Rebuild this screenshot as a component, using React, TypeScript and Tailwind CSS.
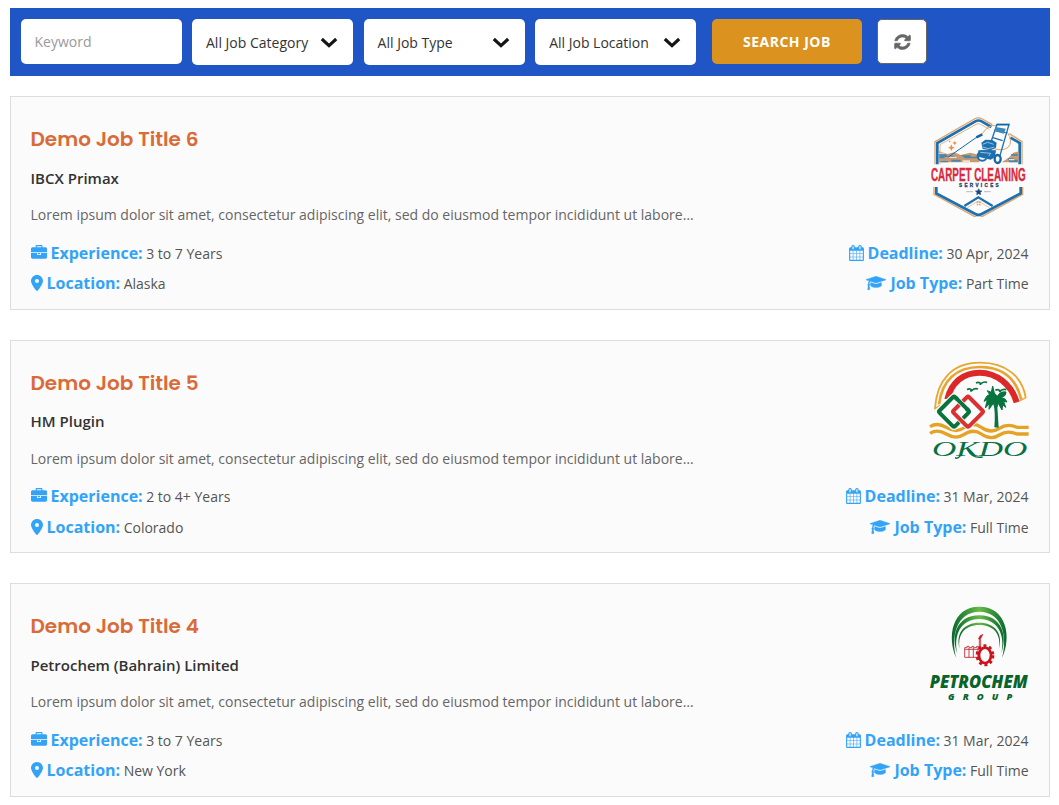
import type { ReactNode } from "react";
import { FaLocationDot } from "react-icons/fa6";

const BRIEFCASE =
  "M640 256h512v-128h-512v128zm1152 640v480q0 66-47 113t-113 47h-1472q-66 0-113-47t-47-113v-480h672v160q0 26 19 45t45 19h320q26 0 45-19t19-45v-160h672zm-768 0v128h-256v-128h256zm768-480v384h-1792v-384q0-66 47-113t113-47h352v-160q0-40 28-68t68-28h576q40 0 68 28t28 68v160h352q66 0 113 47t47 113z";
const CALENDAR =
  "M192 1664h288v-288h-288v288zm352 0h320v-288h-320v288zm-352-352h288v-320h-288v320zm352 0h320v-320h-320v320zm-352-384h288v-288h-288v288zm736 736h320v-288h-320v288zm-384-736h320v-288h-320v288zm768 736h288v-288h-288v288zm-384-352h320v-320h-320v320zm-352-864v-288q0-13-9.5-22.5t-22.5-9.5h-64q-13 0-22.5 9.5t-9.5 22.5v288q0 13 9.5 22.5t22.5 9.5h64q13 0 22.5-9.5t9.5-22.5zm736 864h288v-320h-288v320zm-384-384h320v-288h-320v288zm384 0h288v-288h-288v288zm32-480v-288q0-13-9.5-22.5t-22.5-9.5h-64q-13 0-22.5 9.5t-9.5 22.5v288q0 13 9.5 22.5t22.5 9.5h64q13 0 22.5-9.5t9.5-22.5zm384-64v1280q0 52-38 90t-90 38h-1408q-52 0-90-38t-38-90v-1280q0-52 38-90t90-38h128v-96q0-66 47-113t113-47h64q66 0 113 47t47 113v96h384v-96q0-66 47-113t113-47h64q66 0 113 47t47 113v96h128q52 0 90 38t38 90z";
const GRADUATION =
  "M1774 836l18 316q4 69-82 128t-235 93.5-323 34.5-323-34.5-235-93.5-82-128l18-316 574 181q22 7 48 7t48-7zm530-324q0 23-22 31l-1120 352q-4 1-10 1t-10-1l-652-206q-43 34-71 111.5t-34 178.5q63 36 63 109 0 69-58 107l58 433q2 14-8 25-9 11-24 11h-192q-15 0-24-11-10-11-8-25l58-433q-58-38-58-107 0-73 65-111 11-207 98-330l-333-104q-22-8-22-31t22-31l1120-352q4-1 10-1t10 1l1120 352q22 8 22 31z";
const REFRESH =
  "M1511 1056q0 5-1 7-64 268-268 434.5t-478 166.5q-146 0-282.5-55t-243.5-157l-129 129q-19 19-45 19t-45-19-19-45v-448q0-26 19-45t45-19h448q26 0 45 19t19 45-19 45l-137 137q71 66 161 102t187 36q134 0 250-65t186-179q11-17 53-117 8-23 30-23h192q13 0 22.5 9.5t9.5 22.5zm25-800v448q0 26-19 45t-45 19h-448q-26 0-45-19t-19-45 19-45l138-138q-148-137-349-137-134 0-250 65t-186 179q-11 17-53 117-8 23-30 23h-199q-13 0-22.5-9.5t-9.5-22.5v-7q65-268 270-434.5t480-166.5q146 0 284 55.5t245 156.5l130-129q19-19 45-19t45 19 19 45z";

function Glyph({ d, box, className }: { d: string; box: string; className: string }) {
  return (
    <svg viewBox={box} className={className} fill="currentColor">
      <path d={d} />
    </svg>
  );
}

function Select({ label }: { label: string }) {
  return (
    <button className="mr-[10.4px] flex h-[46px] w-[161.2px] items-center justify-between rounded-[5px] bg-white pr-[15px] pl-[14px] text-sm text-[#333]">
      <span className="pt-[2px]">{label}</span>
      <svg viewBox="0 0 18 11" className="h-[11px] w-[18px]" fill="none">
        <path d="M1.8 2 9 8.6 16.2 2" stroke="#151515" strokeWidth="3.1" />
      </svg>
    </button>
  );
}

function CarpetLogo() {
  return (
    <svg viewBox="27 36 300 300" className="size-[100px]" fontFamily="'Liberation Sans Narrow','Liberation Sans',sans-serif">
      <g fill="none">
        <path d="M45 178V110L163 42Q175 35 187 42L217 59M268 86 306 110V178" stroke="#dda46c" strokeWidth="4" />
        <path d="M52 178V114L166 49Q175 44 185 49L214 66M271 98 299 114V178" stroke="#1d70b0" strokeWidth="8" />
        <path d="M60 178V119L168 58Q175 54 182 58L208 73" stroke="#dda46c" strokeWidth="2.5" />
        <path d="M42 246V268L163 334Q175 341 187 334L308 268V246" stroke="#dda46c" strokeWidth="4" />
        <path d="M49 246V265L166 327Q175 332 185 327L302 265V246" stroke="#1d70b0" strokeWidth="8" />
        <path d="M133 303 175 277 218 303" stroke="#1d70b0" strokeWidth="7" />
        <path d="M142 308 175 288 208 308" stroke="#dda46c" strokeWidth="2" />
      </g>
      <path d="M57 139 82 147 103 142 122 150 150 143 178 149V172H57z" fill="#c79a73" />
      <path d="M245 172 266 158 280 143 296 139V172z" fill="#c79a73" />
      <path d="M58 148h22v4h24v4h-30v4H58zm36 16h28v6H94zm28-13h30v4h22v5h-38zm-60 17h22v4H62zm201-8h18v4h12v8h-25zm11-13h19v5h-19z" fill="#4b86ae" />
      <path d="M57 143h17v3H57zm31 12h22v4H88zm40 11h22v5h-22zm139-4h16v4h-16z" fill="#f4dfc7" />
      <path d="m94 118 3 7 7 3-7 3-3 7-3-7-7-3 7-3zm10-11 2 5 5 2-5 2-2 5-2-5-5-2 5-2zm-15-2 1 3 3 1-3 1-1 3-1-3-3-1 3-1z" fill="#ed8d43" />
      <g fill="none">
        <path d="M187 86Q205 57 230 62M261 80Q281 111 264 127 249 139 220 131" stroke="#dda46c" strokeWidth="3" />
        <path d="M88 154 171 96" stroke="#1765a2" strokeWidth="3" />
        <path d="M169 97 187 88" stroke="#1765a2" strokeWidth="8" />
        <path d="M211 116 231 58H267L239 155M223 75 257 83M216 97 248 107" stroke="#1d70b0" strokeWidth="4" />
        <path d="M230 59H268" stroke="#1765a2" strokeWidth="5" />
        <circle cx="187" cy="153" r="14" stroke="#1d70b0" strokeWidth="6" />
        <ellipse cx="233" cy="162" rx="9" ry="12" stroke="#1765a2" strokeWidth="7" />
      </g>
      <path d="m184 113 12-9 21 1 13 8-2 15-16 8-24-4zm-9 23 31-1 22 1-3 21-13 7-38-9z" fill="#1d70b0" />
      <path d="m227 66 30 5-5 15-28-7z" fill="#3d89bc" />
      <path d="m188 118 15-6 18 6m-33 8 17 5 18-5M181 142l31 3-6 8" fill="none" stroke="#d7eaf5" strokeWidth="2" />
      <text x="33" y="228" fontSize="56" fontWeight="700" fill="#d62b3d" stroke="#d62b3d" strokeWidth="1" textLength="284" lengthAdjust="spacingAndGlyphs">CARPET CLEANING</text>
      <text x="117" y="246" fontSize="14" fontWeight="700" fill="#263f66" stroke="#263f66" strokeWidth="0.8" textLength="119">SERVICES</text>
      <path d="m176 251 3 6 7 1-5 4 1 7-6-3-6 3 1-7-5-4 7-1z" fill="#164b7f" stroke="#164b7f" strokeWidth="1.5" />
      <path d="M139 260h20m33 0h20" stroke="#b9bbc0" strokeWidth="3" />
      <path d="M170 289h5v5h-5zm7 0h5v5h-5zm-7 7h5v5h-5zm7 0h5v5h-5z" fill="#dda46c" />
    </svg>
  );
}

function OkdoLogo() {
  return (
    <svg viewBox="27 33 300 300" className="size-[100px]">
      <g fill="none">
        <path d="M45 176C50 89 98 38 180 38S307 83 317 142" stroke="#e6a630" strokeWidth="5.5" />
        <path d="M57 163C66 92 108 51 180 51S290 91 304 149" stroke="#e6a630" strokeWidth="8" />
        <path d="M43 178 61 165M299 153 319 142" stroke="#e6a630" strokeWidth="4" />
        <path d="M82 148C94 97 130 68 179 68S274 102 290 157" stroke="#dc2828" strokeWidth="18" />
        <path d="M30 230C47 219 62 222 79 232S114 246 131 234 167 220 184 232 220 247 238 235 275 225 291 232L326 232M30 250C47 239 62 242 79 252S114 266 131 254 167 240 184 252 220 267 238 255 275 245 291 252L326 252" stroke="#e5a326" strokeWidth="10" />
        <rect x="68" y="151" width="68" height="68" rx="5" transform="rotate(45 102 185)" stroke="#fcfcfc" strokeWidth="18" />
        <rect x="69" y="152" width="66" height="66" rx="5" transform="rotate(45 102 185)" stroke="#08733d" strokeWidth="12" />
        <rect x="111" y="152" width="66" height="66" rx="5" transform="rotate(45 144 185)" stroke="#fcfcfc" strokeWidth="17" />
        <rect x="111" y="152" width="66" height="66" rx="5" transform="rotate(45 144 185)" stroke="#d83233" strokeWidth="12" />
        <path d="m112 148 27 27" stroke="#fcfcfc" strokeWidth="16" />
        <path d="m106 142 40 40" stroke="#08733d" strokeWidth="12" />
        <path d="M141 119q8-5 15 2 8-7 18-4M168 99q8-5 15 2 8-7 18-4M226 121q8-5 15 2 8-7 18-4" stroke="#08733d" strokeWidth="5" />
        <path d="M153 120v5M181 100v5M239 122v5" stroke="#08733d" strokeWidth="5" />
      </g>
      <path d="M223 232q4-43-3-75l11-2 5 78z" fill="#08733d" />
      <path d="M220 143Q207 125 197 144L192 154 202 149 196 174 208 161 207 178 220 160 228 177 235 160 246 180 248 164 257 172 251 154 261 156Q257 144 244 143 260 137 258 126 241 123 232 139L223 129 218 108 214 127 202 122 210 136Z" fill="#08733d" stroke="#08733d" strokeWidth="3" />
      <text x="36" y="318" fontSize="60" fontFamily="'Liberation Serif',serif" fontStyle="italic" fill="#087144" textLength="286" lengthAdjust="spacingAndGlyphs">OKDO</text>
      <path d="m143 300q14 26 45 21M105 323q7 5 16-5" fill="none" stroke="#087144" strokeWidth="4" />
    </svg>
  );
}

function PetrochemLogo() {
  return (
    <svg viewBox="27 28 300 300" className="size-[100px]" fontFamily="'Open Sans','Liberation Sans',sans-serif">
      <defs>
        <linearGradient id="arch" x1="0" x2="1" y1="0" y2="0">
          <stop offset="0" stopColor="#08682e" />
          <stop offset="0.5" stopColor="#67ba45" />
          <stop offset="1" stopColor="#08682e" />
        </linearGradient>
      </defs>
      <g fill="url(#arch)">
        <path d="M109 190C80 128 96 36 178 36S276 128 246 190C264 127 246 51 178 51S91 127 109 190" />
        <path d="M112 176C92 126 109 62 178 62S263 126 244 176C256 123 235 73 178 73S100 123 112 176" />
        <path d="M119 162C106 116 132 84 178 84S250 116 237 162C244 120 222 91 178 91S112 120 119 162" />
      </g>
      <g fill="none" stroke="#bf242b">
        <path d="M134 188V159h7v-4h6v4h9v-4h5v4h9v-4h5v4h8M134 188h40M147 160v28M160 160v28M174 160v28M135 164h42" strokeWidth="2.5" />
        <path d="M178 157V135h4v22" strokeWidth="2.5" />
      </g>
      <path d="m175 133 5-10 9-4-4 8-4 7z" fill="#bf242b" stroke="#bf242b" strokeWidth="1.5" />
      <ellipse cx="195" cy="182" rx="24" ry="29" fill="none" stroke="#c9131d" strokeWidth="8" strokeDasharray="9 8.1" />
      <ellipse cx="195" cy="182" rx="18" ry="23" fill="#fcfcfc" stroke="#c9131d" strokeWidth="8" />
      <text x="29" y="279" fontSize="52" fontWeight="800" fontStyle="italic" fill="#08642b" textLength="294" lengthAdjust="spacingAndGlyphs">PETROCHEM</text>
      <text x="84" y="315" fontSize="28" fontWeight="800" fontStyle="italic" fill="#08642b" textLength="193">GROUP</text>
    </svg>
  );
}

interface Job {
  title: string;
  company: string;
  experience: string;
  location: string;
  deadline: string;
  type: string;
  logo: ReactNode;
}

const jobs: Job[] = [
  { title: "Demo Job Title 6", company: "IBCX Primax", experience: "3 to 7 Years", location: "Alaska", deadline: "30 Apr, 2024", type: "Part Time", logo: <CarpetLogo /> },
  { title: "Demo Job Title 5", company: "HM Plugin", experience: "2 to 4+ Years", location: "Colorado", deadline: "31 Mar, 2024", type: "Full Time", logo: <OkdoLogo /> },
  { title: "Demo Job Title 4", company: "Petrochem (Bahrain) Limited", experience: "3 to 7 Years", location: "New York", deadline: "31 Mar, 2024", type: "Full Time", logo: <PetrochemLogo /> },
];

function Meta({ icon, label, value }: { icon: ReactNode; label: string; value: string }) {
  return (
    <div className="flex h-[30.4px] items-center">
      <span className="mr-1 text-[#33a3f8]">{icon}</span>
      <span className="text-base font-bold text-[#33a3f8]">{label}</span>
      <span className="ml-[3.5px] pt-[1.5px] text-sm text-[#555]">{value}</span>
    </div>
  );
}

function JobCard({ job }: { job: Job }) {
  return (
    <article className="h-[213.5px] border border-[#ddd] bg-[#fbfbfb] pt-5 pr-[20.5px] pl-[19.5px]">
      <div className="flex h-[120.8px] justify-between">
        <div>
          <h2 className="pt-[7px] font-[Poppins,Inter,sans-serif] text-[20px] leading-[30px] font-semibold text-[#d96b39]">{job.title}</h2>
          <h3 className="mt-[12.5px] text-[15px] leading-[22px] font-semibold text-[#333]">{job.company}</h3>
          <p className="mt-[15.5px] text-sm leading-[22px] text-[#666]">Lorem ipsum dolor sit amet, consectetur adipiscing elit, sed do eiusmod tempor incididunt ut labore…</p>
        </div>
        <div>{job.logo}</div>
      </div>
      <div className="flex justify-between">
        <div>
          <Meta icon={<Glyph d={BRIEFCASE} box="0 0 1792 1792" className="h-4 w-4" />} label="Experience:" value={job.experience} />
          <Meta icon={<FaLocationDot className="h-4 w-3" />} label="Location:" value={job.location} />
        </div>
        <div className="flex flex-col items-end">
          <Meta icon={<Glyph d={CALENDAR} box="64 0 1664 1792" className="h-4 w-[15px]" />} label="Deadline:" value={job.deadline} />
          <Meta
            icon={
              <svg viewBox="0 0 2304 1792" className="h-4 w-5" fill="currentColor">
                <path d={GRADUATION} stroke="currentColor" strokeWidth="40" />
              </svg>
            }
            label="Job Type:"
            value={job.type}
          />
        </div>
      </div>
    </article>
  );
}

export default function App() {
  return (
    <main className="h-[805px] overflow-hidden bg-white pt-2 pr-[9px] pl-[10px] font-['Open_Sans',sans-serif]">
      <form className="flex h-[68px] items-start bg-[#1f55c5] pt-[11px] pl-[11px]">
        <input aria-label="Keyword" placeholder="Keyword" className="mr-[10px] h-[45px] w-[161px] rounded-[5px] bg-white px-[13.5px] text-sm placeholder:text-[#999]" />
        <Select label="All Job Category" />
        <Select label="All Job Type" />
        <Select label="All Job Location" />
        <button className="ml-[5.2px] h-[45px] w-[150px] rounded-[5px] bg-[#dc921f] text-sm font-bold tracking-[0.5px] text-white">SEARCH JOB</button>
        <button aria-label="Reset" className="ml-[15px] flex h-[45px] w-[50px] items-center justify-center rounded-[5px] border border-[#666] bg-white pl-px text-[#666]">
          <svg viewBox="-60 68 1656 1656" preserveAspectRatio="none" className="h-4 w-[17px]" fill="currentColor">
            <path d={REFRESH} stroke="currentColor" strokeWidth="70" />
          </svg>
        </button>
      </form>
      <section className="mt-5 flex flex-col gap-[30px]">
        {jobs.map((job) => (
          <JobCard key={job.title} job={job} />
        ))}
      </section>
    </main>
  );
}
